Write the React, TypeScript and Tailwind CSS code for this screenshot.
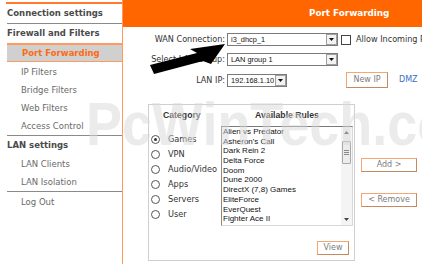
import React from "react";

const V = { fontFamily: '"DejaVu Sans", Verdana, sans-serif' };
const A = { fontFamily: '"Liberation Sans", Arial, sans-serif' };

function Caret() {
  return (
    <div className="flex h-[11px] w-[11px] shrink-0 items-center justify-center border border-[#a0a0a0] bg-[#f2f2f2]">
      <svg width="5" height="3" viewBox="0 0 5 3">
        <polygon points="0,0 5,0 2.5,3" fill="#111" />
      </svg>
    </div>
  );
}

function Select({ w, text }: { w: string; text: string }) {
  return (
    <div className={`flex h-[13px] ${w} shrink-0 items-center justify-between overflow-hidden border border-[#7a7a7a] bg-white`}>
      <span className="min-w-0 overflow-hidden whitespace-nowrap pl-[3px] text-[7.4px] leading-[11px] text-[#111]" style={A}>
        {text}
      </span>
      <Caret />
    </div>
  );
}

function Btn({ label, cls }: { label: string; cls: string }) {
  return (
    <div
      className={`flex shrink-0 items-center justify-center border border-t-[#f6a771] border-l-[#f6a771] border-r-[#c38a62] border-b-[#c38a62] bg-white text-[8px] leading-none text-[#7c7c7c] ${cls}`}
      style={V}
    >
      {label}
    </div>
  );
}

function Radio({ label, on }: { label: string; on?: boolean }) {
  return (
    <div className="flex h-[15px] items-center">
      <div className="ml-[2px] flex h-[9px] w-[9px] shrink-0 items-center justify-center rounded-full border border-[#555] bg-white">
        {on && <div className="h-[3px] w-[3px] rounded-full bg-[#333]" />}
      </div>
      <span className="ml-[8px] whitespace-nowrap text-[8.2px] leading-none text-[#333]" style={V}>
        {label}
      </span>
    </div>
  );
}

const rules = [
  "Alien vs Predator",
  "Asheron's Call",
  "Dark Rein 2",
  "Delta Force",
  "Doom",
  "Dune 2000",
  "DirectX (7,8) Games",
  "EliteForce",
  "EverQuest",
  "Fighter Ace II",
];

export default function App() {
  const sub = "flex h-[18px] items-center pl-[15px] text-[8.5px] text-[#6a6a6a] whitespace-nowrap";
  const head = "flex h-[19px] items-center text-[8.5px] font-bold text-[#4a4a4a] whitespace-nowrap";
  const label = "w-[103px] shrink-0 pr-[1px] text-right text-[8.1px] text-[#333]";
  return (
    <div className="relative h-[264px] w-[422px] overflow-hidden bg-white" style={V}>
      <div className="flex h-full">
        {/* Sidebar */}
        <div className="h-full w-[123px] shrink-0 border-r border-[#ff9a5c] pl-[6px] pt-[2px]">
          <div className="h-[2px] bg-[#ff7a2a]" />
          <div className={`${head} pl-[1px]`}>Connection settings</div>
          <div className="ml-[1px] h-px bg-[#8a8a8a]" />
          <div className={`${head} pl-[1px]`}>Firewall and Filters</div>
          <div className="ml-[1px] flex h-[19px] items-center border-t-2 border-b border-[#ff9a5c] bg-[#d0d0d0] pl-[15px] text-[8.5px] font-bold text-[#ff6a10]">
            Port Forwarding
          </div>
          <div className="mt-px">
            <div className={sub}>IP Filters</div>
            <div className={sub}>Bridge Filters</div>
            <div className={sub}>Web Filters</div>
            <div className={sub}>Access Control</div>
          </div>
          <div className="ml-[1px] h-px bg-[#8a8a8a]" />
          <div className={`${head} pl-[1px]`}>LAN settings</div>
          <div className={sub}>LAN Clients</div>
          <div className={sub}>LAN Isolation</div>
          <div className="ml-[1px] h-px bg-[#8a8a8a]" />
          <div className={`${sub} h-[21px]`}>Log Out</div>
        </div>

        {/* Main */}
        <div className="min-w-0 flex-1 overflow-hidden">
          <div className="flex h-[27px] items-center bg-[#ff6600] pl-[186px] text-[8.8px] font-bold text-white whitespace-nowrap">
            Port Forwarding
          </div>

          <div className="mt-[6px] flex h-[13px] items-center whitespace-nowrap">
            <div className={label}>WAN Connection:</div>
            <div className="ml-[1px] shrink-0">
              <Select w="w-[111px]" text="i3_dhcp_1" />
            </div>
            <div className="ml-[3px] h-[10px] w-[10px] shrink-0 border border-[#444] bg-white" />
            <span className="ml-[5px] shrink-0 text-[8.1px] text-[#333]">Allow Incoming Ping</span>
          </div>

          <div className="mt-[7px] flex h-[13px] items-center whitespace-nowrap">
            <div className={label}>Select LAN Group:</div>
            <div className="ml-[1px] shrink-0">
              <Select w="w-[111px]" text="LAN group 1" />
            </div>
          </div>

          <div className="mt-[6px] flex h-[16px] items-center whitespace-nowrap">
            <div className={label}>LAN IP:</div>
            <div className="ml-[1px] shrink-0">
              <Select w="w-[60px]" text="192.168.1.10" />
            </div>
            <Btn label="New IP" cls="ml-[59px] h-[16px] w-[42px]" />
            <span className="ml-[11px] shrink-0 text-[8px] text-[#3a6fc4]">DMZ</span>
          </div>

          <div className="mt-[16px] flex items-start">
            {/* group box */}
            <div className="ml-[25px] h-[157px] w-[207px] shrink-0 border border-[#cfcfcf]">
              <div className="flex h-[21px] items-center">
                <div className="w-[72px] shrink-0 pl-[14px] text-[8.7px] font-bold text-[#333]" style={A}>
                  Category
                </div>
                <div className="w-[132px] shrink-0 text-center text-[8.7px] font-bold text-[#333]" style={A}>
                  Available Rules
                </div>
              </div>
              <div className="flex h-[100px]">
                <div className="w-[72px] shrink-0 pt-[6px]">
                  <Radio label="Games" on />
                  <Radio label="VPN" />
                  <Radio label="Audio/Video" />
                  <Radio label="Apps" />
                  <Radio label="Servers" />
                  <Radio label="User" />
                </div>
                <div className="flex h-[100px] w-[132px] shrink-0 border border-t-[#7a7a7a] border-l-[#8a8a8a] border-r-[#d8d8d8] border-b-[#d8d8d8] bg-white">
                  <div className="min-w-0 flex-1 overflow-hidden pl-[1px]">
                    {rules.map((r) => (
                      <div
                        key={r}
                        className="h-[9.7px] whitespace-nowrap text-[8px] leading-[9.7px] text-[#111]"
                        style={A}
                      >
                        {r}
                      </div>
                    ))}
                  </div>
                  <div className="flex w-[11px] shrink-0 flex-col items-center bg-[#f4f4f4]">
                    <div className="flex h-[11px] w-[11px] items-center justify-center">
                      <svg width="5" height="3" viewBox="0 0 5 3">
                        <polygon points="2.5,0 5,3 0,3" fill="#444" />
                      </svg>
                    </div>
                    <div className="mt-[3px] flex h-[23px] w-[9px] flex-col items-center justify-center gap-[1px] rounded-[1px] border border-[#aaa] bg-[#ececec]">
                      <div className="h-px w-[5px] bg-[#888]" />
                      <div className="h-px w-[5px] bg-[#888]" />
                      <div className="h-px w-[5px] bg-[#888]" />
                    </div>
                    <div className="flex-1" />
                    <div className="flex h-[11px] w-[11px] items-center justify-center">
                      <svg width="5" height="3" viewBox="0 0 5 3">
                        <polygon points="0,0 5,0 2.5,3" fill="#444" />
                      </svg>
                    </div>
                  </div>
                </div>
              </div>
              <div className="mt-[15px] flex justify-end pr-[5px]">
                <Btn label="View" cls="h-[14px] w-[32px]" />
              </div>
            </div>

            <div className="ml-[6px] flex w-[56px] shrink-0 flex-col">
              <Btn label="Add >" cls="mt-[54px] h-[14px] w-[56px]" />
              <Btn label="< Remove" cls="mt-[21px] h-[14px] w-[56px]" />
            </div>
          </div>
        </div>
      </div>

      {/* watermark */}
      <div
        className="pointer-events-none absolute left-[86px] top-[93px] origin-left scale-x-[0.87] whitespace-nowrap text-[62px] font-bold leading-none text-[#d9d9d9] opacity-50"
        style={A}
      >
        PcWinTech.com
      </div>

      {/* arrow */}
      <svg className="pointer-events-none absolute left-0 top-0" width="422" height="264">
        <polygon
          points="225,44 211,64 203,61 154,74 150,65 197,53 190,49"
          fill="#000"
        />
      </svg>
    </div>
  );
}
